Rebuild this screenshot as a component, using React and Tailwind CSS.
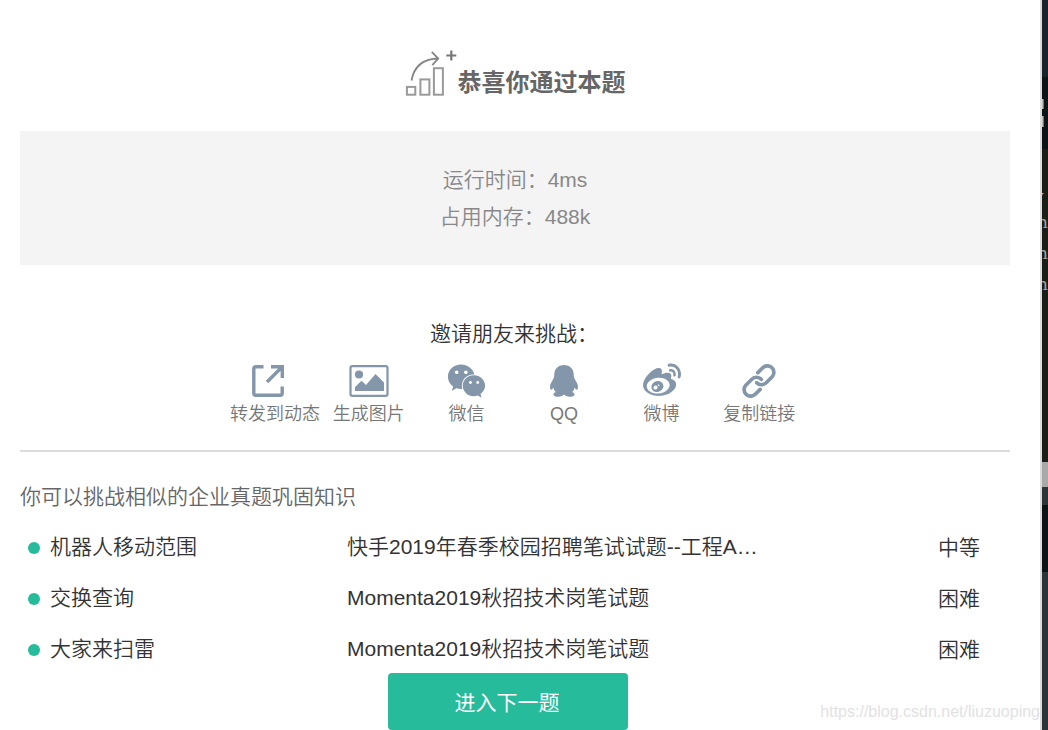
import { FaWeixin, FaWeibo } from "react-icons/fa";

function GrowthIcon() {
  return (
    <svg width="53" height="48" viewBox="0 0 53 48" fill="none" className="shrink-0">
      <g stroke="#9a9a9a" strokeWidth="2">
        <rect x="1.9" y="37.9" width="8.4" height="7.8" />
        <rect x="15.4" y="30.4" width="9" height="15.3" />
        <rect x="28.9" y="19.2" width="9" height="26.5" />
      </g>
      <path d="M6.5 31.5C8.5 20 16 10.5 32 9.5M26.8 2.8L33.2 9.6L27.3 16.2" stroke="#858585" strokeWidth="1.8" />
      <path d="M46.3 1.5V11.5M41.3 6.5H51.3" stroke="#777" strokeWidth="2.2" />
    </svg>
  );
}

function ForwardIcon() {
  return (
    <svg width="32" height="32" viewBox="0 0 32 32" fill="none" stroke="currentColor" strokeWidth="3.4">
      <path d="M11.5 1.8H3.8Q1.8 1.8 1.8 3.8V28.2Q1.8 30.2 3.8 30.2H28.2Q30.2 30.2 30.2 28.2V21.5" />
      <path d="M19 1.7H30.3V13M29.5 2.5L15 17" />
    </svg>
  );
}

function PictureIcon() {
  return (
    <svg width="40" height="32" viewBox="0 0 40 32" fill="currentColor">
      <rect x="1.5" y="1.1" width="37" height="29.8" rx="1.8" fill="none" stroke="currentColor" strokeWidth="2.2" />
      <circle cx="10" cy="9.5" r="4.1" />
      <path d="M6 26V22L12.5 15.8L17 20L26.5 9L35 17.5V26Z" />
    </svg>
  );
}

function PenguinIcon() {
  return (
    <svg width="28" height="32" viewBox="0 0 28 32" fill="currentColor">
      <path d="M14 0C8.2 0 4.3 4.1 4.3 9.4C4.3 11 4.1 12.2 3.6 13.3C2.2 16.2 0 18.8 0 21.7C0 23.8 .6 24.8 1.2 24.8C2 24.8 2.9 23.3 3.3 22.5C3.8 24.6 4.7 26 5.9 27C4.3 27.5 3.5 28.4 3.5 29.4C3.5 31 5.7 31.7 8.2 31.7C10.8 31.7 12.7 30.8 13.6 29.8H14.4C15.3 30.8 17.2 31.7 19.8 31.7C22.3 31.7 24.5 31 24.5 29.4C24.5 28.4 23.7 27.5 22.1 27C23.3 26 24.2 24.6 24.7 22.5C25.1 23.3 26 24.8 26.8 24.8C27.4 24.8 28 23.8 28 21.7C28 18.8 25.8 16.2 24.4 13.3C23.9 12.2 23.7 11 23.7 9.4C23.7 4.1 19.8 0 14 0Z" />
    </svg>
  );
}

function ChainIcon() {
  return (
    <svg width="34" height="34" viewBox="0 0 24 24" fill="none" stroke="currentColor" strokeWidth="2.6" strokeLinecap="round">
      <path d="M10.4 13.2a4.6 4.6 0 0 0 6.5.2l4.4-4.4a4.6 4.6 0 0 0-6.5-6.5l-3.6 3.6" />
      <path d="M13.6 10.8a4.6 4.6 0 0 0-6.5-.2L2.7 15a4.6 4.6 0 0 0 6.5 6.5l3.6-3.6" />
    </svg>
  );
}

const shares = [
  ["转发到动态", <ForwardIcon />],
  ["生成图片", <PictureIcon />],
  ["微信", <FaWeixin preserveAspectRatio="none" className="h-[38px] w-[39px]" />],
  ["QQ", <PenguinIcon />],
  ["微博", <FaWeibo preserveAspectRatio="none" className="h-[40px] w-[38px]" />],
  ["复制链接", <ChainIcon />],
];

const problems = [
  ["机器人移动范围", "快手2019年春季校园招聘笔试试题--工程A…", "中等"],
  ["交换查询", "Momenta2019秋招技术岗笔试题", "困难"],
  ["大家来扫雷", "Momenta2019秋招技术岗笔试题", "困难"],
];

function EditorStrip() {
  return (
    <div className="relative flex w-[6px] shrink-0 flex-col overflow-hidden font-['DejaVu_Serif',serif] text-[17px] font-normal leading-[20px] text-[#a5a7a1]">
      <div className="h-[77px] shrink-0 bg-[#19242a]" />
      <div className="flex h-[72px] shrink-0 flex-col bg-[#0c1418] pt-[22px]">
        <div className="h-[10px] w-[2px] border-r border-[#98713f] bg-[#bdbdb5]" />
        <div className="mt-[7px] h-[11px] w-[2px] border-r border-[#98713f] bg-[#bdbdb5]" />
      </div>
      <div className="h-[313px] shrink-0 bg-[#1b1d17]" />
      <div className="h-[25px] shrink-0 bg-[#a9a9a9]" />
      <div className="h-[18px] shrink-0 bg-[#2b353a]" />
      <div className="h-[67px] shrink-0 bg-[#0d1418]" />
      <div className="grow bg-[#2c363a]" />
      <span className="absolute -left-[8px] top-[186px]">y</span>
      <span className="absolute -left-[5px] top-[212px]">n</span>
      <span className="absolute -left-[5px] top-[243px]">n</span>
      <span className="absolute -left-[5px] top-[274px]">n</span>
    </div>
  );
}

export default function App() {
  return (
    <div className="relative flex h-[730px] w-[1048px] overflow-hidden bg-white font-['Liberation_Sans','Noto_Sans_CJK_SC',sans-serif] text-[21px] font-[350] text-[#333]">
      <main className="flex w-[1042px] shrink-0 flex-col border-r-2 border-[#dcdcdc] pl-5 pr-[30px]">
        <h1 className="mt-[49px] flex h-[48px] shrink-0 justify-center text-[24px] font-bold text-[#666]">
          <GrowthIcon />
          <span className="mt-[16px] leading-[36px]">恭喜你通过本题</span>
        </h1>
        <section className="mt-[34px] flex h-[134px] shrink-0 flex-col items-center justify-center bg-[#f4f4f4] leading-[37px] text-[#888]">
          <p>运行时间：4ms</p>
          <p>占用内存：488k</p>
        </section>
        <h2 className="mt-[53px] pl-[410px] leading-[32px]">邀请朋友来挑战：</h2>
        <ul className="ml-[210px] mt-[14px] flex h-[87px] shrink-0 text-[#8496aa]">
          {shares.map(([label, icon]) => (
            <li key={label} className="group flex w-[97.6px] flex-col items-center first:w-[90px]">
              <div className="flex h-[34px] items-center group-first:mr-[14px]">{icon}</div>
              <span className="whitespace-nowrap text-[18px] leading-[32px] text-[#777]">{label}</span>
            </li>
          ))}
        </ul>
        <hr className="-mt-px border-t-2 border-[#ddd]" />
        <p className="mt-[28px] leading-[34px] text-[#666]">你可以挑战相似的企业真题巩固知识</p>
        <ul className="mt-[7px]">
          {problems.map(([name, source, level]) => (
            <li key={name} className="flex h-[51px] items-center">
              <i className="ml-2 mr-[10px] mt-[2px] h-3 w-3 rounded-full bg-[#25bb9b]" />
              <span className="w-[297px]">{name}</span>
              <span className="w-[591px] whitespace-nowrap">{source}</span>
              <span className="pt-[2px]">{level}</span>
            </li>
          ))}
        </ul>
        <button className="-mt-px ml-[368px] h-[57px] w-[240px] shrink-0 rounded-[4px] bg-[#25bb9b] pr-[2px] pt-[2px] font-normal text-white">进入下一题</button>
      </main>
      <EditorStrip />
      <span className="absolute right-[8px] top-[702px] text-[16px] font-normal leading-[20px] text-[#e2e2e2]">https://blog.csdn.net/liuzuoping</span>
    </div>
  );
}
